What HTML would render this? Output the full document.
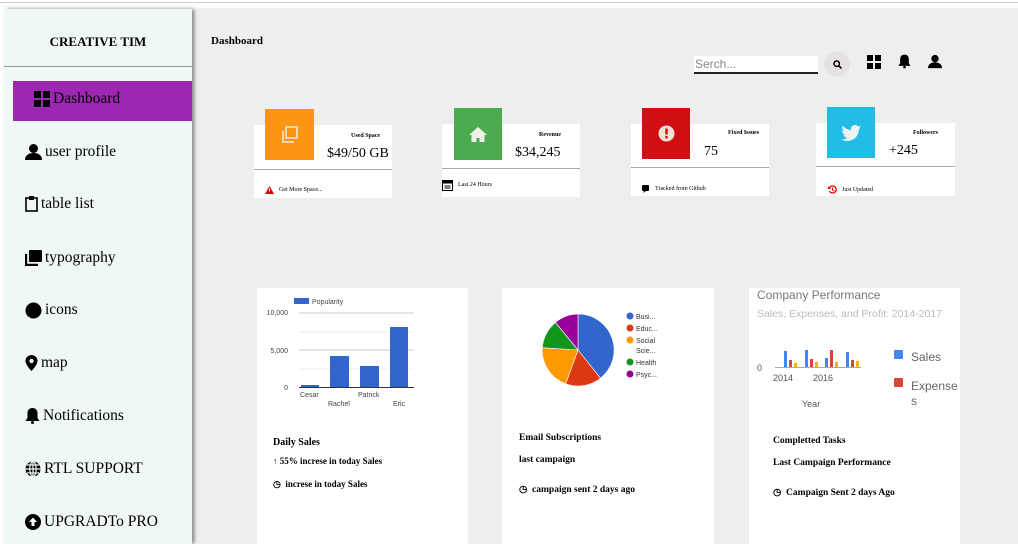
<!DOCTYPE html>
<html><head><meta charset="utf-8"><style>
*{margin:0;padding:0;box-sizing:border-box}
html,body{width:1018px;height:544px;overflow:hidden}
body{background:#fff;font-family:"Liberation Serif",serif;position:relative;color:#000}
.a{position:absolute}
#top{left:0;top:2px;width:1018px;height:1px;background:#ccc}
#side{left:4px;top:9px;width:188px;height:535px;background:#eff7f7;box-shadow:3px 0 4px rgba(0,0,0,.45)}
#main{left:197px;top:8px;width:821px;height:536px;background:#eeeeee}
.nav{position:absolute;left:25px;font-size:15.5px;display:flex;align-items:center;gap:3px}
.card{position:absolute;background:#fff}
.ic{position:absolute;display:flex;align-items:center;justify-content:center}
.sm{font-size:6px;font-weight:bold;position:absolute}
.val{font-size:14px;position:absolute}
.ft{font-size:6px;position:absolute;display:flex;align-items:center;gap:5px}
.hr{position:absolute;left:0;right:0;height:1px;background:#aaa}
.b{font-weight:bold;font-size:10px;position:absolute;white-space:nowrap}
.g{font-family:"Liberation Sans",sans-serif}
</style></head><body>
<div class="a" id="top"></div>
<div class="a" id="side">
 <div class="a" style="left:0;width:188px;top:25px;text-align:center;font-weight:bold;font-size:13px">CREATIVE TIM</div>
 <div class="a" style="left:0;width:188px;top:57px;height:1px;background:#999"></div>
 <div class="a" style="left:9px;top:72px;width:179px;height:40px;background:#9c27b0"></div>
</div>
<div class="nav" style="left:34px;top:90px"><svg width="16" height="16" viewBox="0 0 16 16"><rect x="0" y="0" width="7" height="7"/><rect x="9" y="0" width="7" height="7"/><rect x="0" y="9" width="7" height="7"/><rect x="9" y="9" width="7" height="7"/></svg>Dashboard</div>
<div class="nav" style="top:143px"><svg width="17" height="16" viewBox="0 0 17 16"><circle cx="8.5" cy="4.5" r="4.5"/><path d="M0 16c0-5 4-7 8.5-7s8.5 2 8.5 7z"/></svg>user profile</div>
<div class="nav" style="top:195px"><svg width="13" height="16" viewBox="0 0 13 16"><rect x="1" y="2" width="11" height="13" fill="none" stroke="#000" stroke-width="1.6"/><rect x="4" y="0" width="5" height="4"/></svg>table list</div>
<div class="nav" style="top:249px"><svg width="17" height="16" viewBox="0 0 17 16"><rect x="4" y="0" width="13" height="12" rx="1"/><path d="M1 4v11h12" fill="none" stroke="#000" stroke-width="2.4"/></svg>typography</div>
<div class="nav" style="top:301px"><svg width="17" height="17"><circle cx="8.5" cy="8.5" r="8"/></svg>icons</div>
<div class="nav" style="top:354px"><svg width="13" height="16" viewBox="0 0 13 16"><path d="M6.5 0a6 6 0 0 0-6 6c0 4 6 10 6 10s6-6 6-10a6 6 0 0 0-6-6z"/><circle cx="6.5" cy="6" r="2.2" fill="#eff7f7"/></svg>map</div>
<div class="nav" style="top:407px"><svg width="15" height="16" viewBox="0 0 15 16"><path d="M7.5 0c-3 0-5 2-5 5v5l-2 3h14l-2-3v-5c0-3-2-5-5-5z"/><circle cx="7.5" cy="14.5" r="1.5"/></svg>Notifications</div>
<div class="nav" style="top:460px"><svg width="16" height="16" viewBox="0 0 16 16"><circle cx="8" cy="8" r="7.5"/><path d="M0.5 8h15M8 .5v15M2 4h12M2 12h12" stroke="#eff7f7" stroke-width="1.2"/><ellipse cx="8" cy="8" rx="3.2" ry="7.5" fill="none" stroke="#eff7f7" stroke-width="1.2"/></svg>RTL SUPPORT</div>
<div class="nav" style="top:513px"><svg width="16" height="16" viewBox="0 0 16 16"><circle cx="8" cy="8" r="8"/><path d="M8 3.5l4 4.5H9.5v4h-3v-4H4z" fill="#fff"/></svg>UPGRADTo PRO</div>

<div class="a" id="main"></div>
<div class="a" style="left:211px;top:35px;font-size:11px;font-weight:bold">Dashboard</div>
<div class="a g" style="left:694px;top:56px;width:124px;height:18px;background:#fff;border-bottom:2px solid #222;font-size:12px;color:#888;padding-left:1px;line-height:16px">Serch...</div>
<div class="a" style="left:824px;top:51px;width:26px;height:26px;border-radius:50%;background:#e6e2e4;display:flex;align-items:center;justify-content:center"><svg width="9" height="9" viewBox="0 0 9 9"><circle cx="3.7" cy="3.7" r="2.7" fill="none" stroke="#000" stroke-width="1.5"/><path d="M5.6 5.6L8.5 8.5" stroke="#000" stroke-width="1.6"/></svg></div>
<svg class="a" style="left:867px;top:55px" width="14" height="14"><rect width="6" height="6"/><rect x="8" width="6" height="6"/><rect y="8" width="6" height="6"/><rect x="8" y="8" width="6" height="6"/></svg>
<svg class="a" style="left:898px;top:54px" width="13" height="15" viewBox="0 0 15 16"><path d="M7.5 0c-3 0-5 2-5 5v5l-2 3h14l-2-3v-5c0-3-2-5-5-5z"/><circle cx="7.5" cy="14.5" r="1.5"/></svg>
<svg class="a" style="left:928px;top:54px" width="14" height="15" viewBox="0 0 17 16"><circle cx="8.5" cy="4.5" r="4.5"/><path d="M0 16c0-5 4-7 8.5-7s8.5 2 8.5 7z"/></svg>

<div class="card" style="left:254px;top:125px;width:138px;height:73px"><div class="hr" style="top:44px"></div>
 <div class="sm" style="left:97px;top:8px">Used Space</div><div class="val" style="left:73px;top:21px">$49/50 GB</div>
 <div class="ft" style="left:11px;top:61px"><svg width="9" height="8"><path d="M4.5 0L9 8H0z" fill="#d00"/><rect x="4" y="2.5" width="1" height="3" fill="#fff"/></svg>Get More Space...</div></div>
<div class="ic" style="left:265px;top:109px;width:49px;height:51px;background:#fb9512"><svg width="17" height="17" viewBox="0 0 17 17"><rect x="5" y="1" width="11" height="11" fill="none" stroke="#f6dcc0" stroke-width="1.8"/><path d="M2 5v11h11" fill="none" stroke="#f6dcc0" stroke-width="1.8"/></svg></div>

<div class="card" style="left:442px;top:124px;width:138px;height:73px"><div class="hr" style="top:44px"></div>
 <div class="sm" style="left:97px;top:8px">Revenue</div><div class="val" style="left:73px;top:21px">$34,245</div>
 <div class="ft" style="left:0;top:55px"><svg width="11" height="12" viewBox="0 0 11 12"><rect x="0.5" y="1.5" width="10" height="10" fill="none" stroke="#000"/><rect x="0.5" y="1.5" width="10" height="3"/><path d="M2.5 6.5h2v1h-2zM4.5 6.5h2v1h-2zM6.5 6.5h2v1h-2zM2.5 8.5h6v1h-6z"/></svg>Last 24 Hours</div></div>
<div class="ic" style="left:454px;top:108px;width:48px;height:52px;background:#4caa4f"><svg width="18" height="15" viewBox="0 0 18 15"><path d="M9 0L0 8h2.5v7h5v-4h3v4h5V8H18z" fill="#f1f0e4"/></svg></div>

<div class="card" style="left:631px;top:124px;width:138px;height:72px"><div class="hr" style="top:43px"></div>
 <div class="sm" style="left:97px;top:6px">Fixed Issues</div><div class="val" style="left:73px;top:20px">75</div>
 <div class="ft" style="left:11px;top:61px"><svg width="8" height="8"><rect width="7" height="6" rx="1"/><path d="M2 6l-1 2 3-2z"/></svg>Tracked from Github</div></div>
<div class="ic" style="left:642px;top:108px;width:48px;height:51px;background:#d10e12"><svg width="17" height="17"><circle cx="8.5" cy="8.5" r="8" fill="#f3e3d6"/><rect x="7.3" y="3.5" width="2.4" height="6" fill="#d10e12"/><rect x="7.3" y="11" width="2.4" height="2.4" fill="#d10e12"/></svg></div>

<div class="card" style="left:816px;top:123px;width:139px;height:73px"><div class="hr" style="top:43px"></div>
 <div class="sm" style="left:97px;top:7px">Followers</div><div class="val" style="left:73px;top:20px">+245</div>
 <div class="ft" style="left:12px;top:62px"><svg width="9" height="9" viewBox="0 0 9 9"><path d="M1.5 3A3.5 3.5 0 1 1 1.5 6" fill="none" stroke="#e00" stroke-width="1.3"/><path d="M4.5 2.5v2.5l1.5 1" fill="none" stroke="#e00"/><path d="M0 1v3h3z" fill="#e00"/></svg>Just Updated</div></div>
<div class="ic" style="left:827px;top:107px;width:48px;height:51px;background:#21bde6"><svg width="20" height="16" viewBox="0 0 20 16"><path d="M20 2c-.7.3-1.5.5-2.3.6.8-.5 1.5-1.3 1.8-2.2-.8.5-1.7.8-2.6 1A4 4 0 0 0 10 5C6.7 4.8 3.7 3.2 1.7.8c-1.1 1.8-.5 4.2 1.3 5.4-.7 0-1.3-.2-1.9-.5 0 2 1.4 3.7 3.3 4.1-.6.2-1.3.2-1.9.1.5 1.6 2 2.8 3.8 2.8A8 8 0 0 1 0 14.3 11.4 11.4 0 0 0 6.3 16c7.5 0 11.7-6.3 11.6-11.8.8-.6 1.5-1.3 2.1-2.2z" fill="#eef3f3"/></svg></div>

<div class="card" style="left:257px;top:288px;width:211px;height:256px">
 <svg class="a g" style="left:0;top:0" width="211" height="130" font-family="Liberation Sans" font-size="7" fill="#444">
  <rect x="37" y="10" width="15" height="6" fill="#3366cc"/><text x="55" y="16">Popularity</text>
  <line x1="42" y1="25" x2="157" y2="25" stroke="#ccc"/><line x1="42" y1="44" x2="157" y2="44" stroke="#eee"/>
  <line x1="42" y1="62" x2="157" y2="62" stroke="#ccc"/><line x1="42" y1="81" x2="157" y2="81" stroke="#eee"/>
  <text x="31" y="27" text-anchor="end">10,000</text><text x="31" y="65" text-anchor="end">5,000</text><text x="31" y="102" text-anchor="end">0</text>
  <rect x="44" y="97" width="18" height="2" fill="#3366cc"/><rect x="73" y="68" width="19" height="31" fill="#3366cc"/>
  <rect x="103" y="78" width="19" height="21" fill="#3366cc"/><rect x="133" y="39" width="18" height="60" fill="#3366cc"/>
  <line x1="42" y1="99.5" x2="157" y2="99.5" stroke="#333"/>
  <text x="43" y="109">Cesar</text><text x="71" y="118">Rachel</text><text x="101" y="109">Patrick</text><text x="136" y="118">Eric</text>
 </svg>
 <div class="b" style="left:16px;top:149px">Daily Sales</div>
 <div class="b" style="left:16px;top:168px;font-size:9px">↑ 55% increse in today Sales</div>
 <div class="b" style="left:16px;top:191px;font-size:9px">◷&nbsp; increse in today Sales</div>
</div>
<div class="card" style="left:502px;top:288px;width:212px;height:256px">
 <svg class="a g" style="left:0;top:0" width="212" height="110" font-family="Liberation Sans" font-size="7" fill="#333">
  <g transform="translate(76,62)">
   <path d="M0 0L0-36A36 36 0 0 1 22.5 28.2z" fill="#3366cc" stroke="#fff" stroke-width=".6"/>
   <path d="M0 0L22.5 28.2A36 36 0 0 1-12.3 33.8z" fill="#dc3912" stroke="#fff" stroke-width=".6"/>
   <path d="M0 0L-12.3 33.8A36 36 0 0 1-35.7-2.3z" fill="#ff9900" stroke="#fff" stroke-width=".6"/>
   <path d="M0 0L-35.7-2.3A36 36 0 0 1-22.5-27.5z" fill="#109618" stroke="#fff" stroke-width=".6"/>
   <path d="M0 0L-22.5-27.5A36 36 0 0 1 0-36z" fill="#990099" stroke="#fff" stroke-width=".6"/>
  </g>
  <circle cx="128" cy="28" r="3.5" fill="#3366cc"/><text x="134" y="31">Busi...</text>
  <circle cx="128" cy="40" r="3.5" fill="#dc3912"/><text x="134" y="43">Educ...</text>
  <circle cx="128" cy="52" r="3.5" fill="#ff9900"/><text x="134" y="55">Social</text><text x="134" y="65">Scie...</text>
  <circle cx="128" cy="74" r="3.5" fill="#109618"/><text x="134" y="77">Health</text>
  <circle cx="128" cy="86" r="3.5" fill="#990099"/><text x="134" y="89">Psyc...</text>
 </svg>
 <div class="b" style="left:17px;top:145px;font-size:9.5px">Email Subscriptions</div>
 <div class="b" style="left:17px;top:167px;font-size:9.5px">last campaign</div>
 <div class="b" style="left:17px;top:196px;font-size:9.5px">◷&nbsp; campaign sent 2 days ago</div>
</div>
<div class="card" style="left:749px;top:288px;width:211px;height:256px">
 <svg class="a g" style="left:0;top:0" width="211" height="130" font-family="Liberation Sans">
  <text x="8" y="11" font-size="12" fill="#777">Company Performance</text>
  <text x="8" y="29" font-size="10.5" fill="#bbb">Sales, Expenses, and Profit: 2014-2017</text>
  <text x="8" y="83" font-size="9" fill="#555">0</text>
  <line x1="26" y1="79.5" x2="112" y2="79.5" stroke="#aaa"/>
  <rect x="35" y="63" width="3" height="16" fill="#4285f4"/><rect x="40" y="72" width="3" height="7" fill="#db4437"/><rect x="45" y="75" width="3" height="4" fill="#f4b400"/>
  <rect x="56" y="62" width="3" height="17" fill="#4285f4"/><rect x="61" y="71" width="3" height="8" fill="#db4437"/><rect x="66" y="74" width="3" height="5" fill="#f4b400"/>
  <rect x="76" y="70" width="3" height="9" fill="#4285f4"/><rect x="81" y="62" width="3" height="17" fill="#db4437"/><rect x="86" y="74" width="3" height="5" fill="#f4b400"/>
  <rect x="97" y="64" width="3" height="15" fill="#4285f4"/><rect x="102" y="72" width="3" height="7" fill="#db4437"/><rect x="107" y="73" width="3" height="6" fill="#f4b400"/>
  <text x="24" y="93" font-size="9" fill="#555">2014</text><text x="64" y="93" font-size="9" fill="#555">2016</text>
  <text x="53" y="119" font-size="9" fill="#555">Year</text>
  <rect x="145" y="62" width="9" height="9" rx="1" fill="#4285f4"/><text x="162" y="73" font-size="12" fill="#666">Sales</text>
  <rect x="145" y="90" width="9" height="9" rx="1" fill="#db4437"/><text x="162" y="102" font-size="12" fill="#666">Expense</text><text x="162" y="117" font-size="12" fill="#666">s</text>
 </svg>
 <div class="b" style="left:24px;top:148px;font-size:9.5px">Completted Tasks</div>
 <div class="b" style="left:24px;top:170px;font-size:9.5px">Last Campaign Performance</div>
 <div class="b" style="left:24px;top:199px;font-size:9.5px">◷&nbsp; Campaign Sent 2 days Ago</div>
</div>
</body></html>
